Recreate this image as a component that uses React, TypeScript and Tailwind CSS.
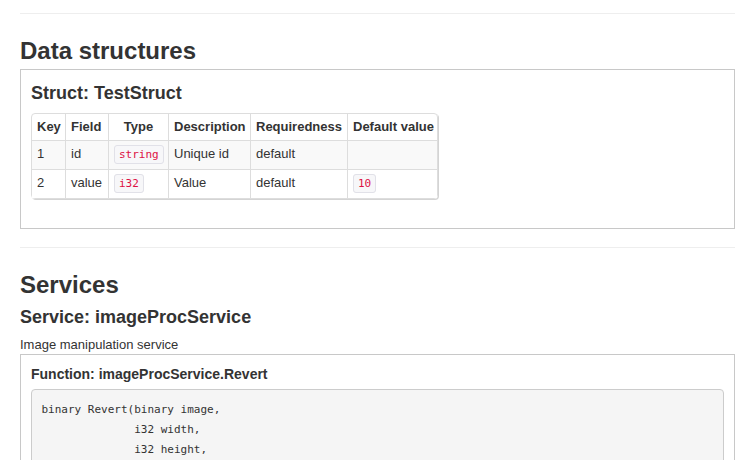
import React from 'react'

const sans = "font-['Liberation_Sans',Arial,sans-serif]"
const mono = "font-['DejaVu_Sans_Mono',monospace]"

function Code({ children }: { children: React.ReactNode }) {
    return (
        <code className={`${mono} text-[11px] leading-none text-[#dd1144] bg-[#f7f7f9] border border-[#e1e1e8] rounded-[3px] px-[4px] py-[2px]`}>
            {children}
        </code>
    )
}

const fields = [
    { key: '1', name: 'id', type: 'string', desc: 'Unique id', req: 'default', def: '' },
    { key: '2', name: 'value', type: 'i32', desc: 'Value', req: 'default', def: '10' },
]

const head = ['Key', 'Field', 'Type', 'Description', 'Requiredness', 'Default value']
const widths = ['w-[33px]', 'w-[43px]', 'w-[60px]', 'w-[82px]', 'w-[97px]', 'w-[90px]']

export default function App() {
    return (
        <div className={`${sans} text-[13px] text-[#333] bg-white min-h-screen px-5 pt-[13px]`}>
            <hr className="border-0 border-t border-[#eee]" />

            {/* Data structures */}
            <h2 className="mt-[23px] text-[24px] leading-[27px] font-bold">Data structures</h2>
            <div className="mt-[5px] border border-[#c8c8c8] pt-[13px] px-[10px] pb-[29px]">
                <h4 className="text-[18px] leading-[20px] font-bold">Struct: TestStruct</h4>
                <table className="mt-[10px] w-[406px] table-fixed border-separate border-spacing-0 border border-[#ddd] rounded-[4px] shadow-[1px_1px_0_#d4d4d4]">
                    <thead>
                        <tr>
                            {head.map((h, i) => (
                                <th
                                    key={h}
                                    className={`${widths[i]} ${i > 0 ? 'border-l border-[#ddd]' : ''} ${i === 2 ? 'text-center' : 'text-left'} px-[5px] pt-[4px] pb-[4px] leading-[18px] font-bold whitespace-nowrap`}
                                >
                                    {h}
                                </th>
                            ))}
                        </tr>
                    </thead>
                    <tbody>
                        {fields.map((f, r) => {
                            const cells = [
                                f.key,
                                f.name,
                                <Code>{f.type}</Code>,
                                f.desc,
                                f.req,
                                f.def ? <Code>{f.def}</Code> : '',
                            ]
                            return (
                                <tr key={f.key} className={r % 2 === 0 ? 'bg-[#f9f9f9]' : 'bg-white'}>
                                    {cells.map((c, i) => (
                                        <td
                                            key={i}
                                            className={`${i > 0 ? 'border-l border-[#ddd]' : ''} border-t border-[#ddd] px-[5px] pt-[3px] pb-[5px] leading-[20px] align-top whitespace-nowrap`}
                                        >
                                            {c}
                                        </td>
                                    ))}
                                </tr>
                            )
                        })}
                    </tbody>
                </table>
            </div>

            <hr className="mt-[18px] border-0 border-t border-[#eee]" />

            {/* Services */}
            <h2 className="mt-[23px] text-[24px] leading-[27px] font-bold">Services</h2>
            <h3 className="mt-[9px] text-[18px] leading-[20px] font-bold">Service: imageProcService</h3>
            <p className="mt-[9px] leading-[18px]">Image manipulation service</p>
            <div className="border border-[#c8c8c8] pt-[9px] px-[10px] pb-[20px]">
                <h5 className="text-[14px] leading-[20px] font-bold">Function: imageProcService.Revert</h5>
                <pre className={`${mono} mt-[5px] text-[11px] leading-[20px] text-[#333] bg-[#f5f5f5] border border-[#ccc] rounded-[4px] p-[9.5px]`}>
{`binary Revert(binary image,
              i32 width,
              i32 height,`}
                </pre>
            </div>
        </div>
    )
}
